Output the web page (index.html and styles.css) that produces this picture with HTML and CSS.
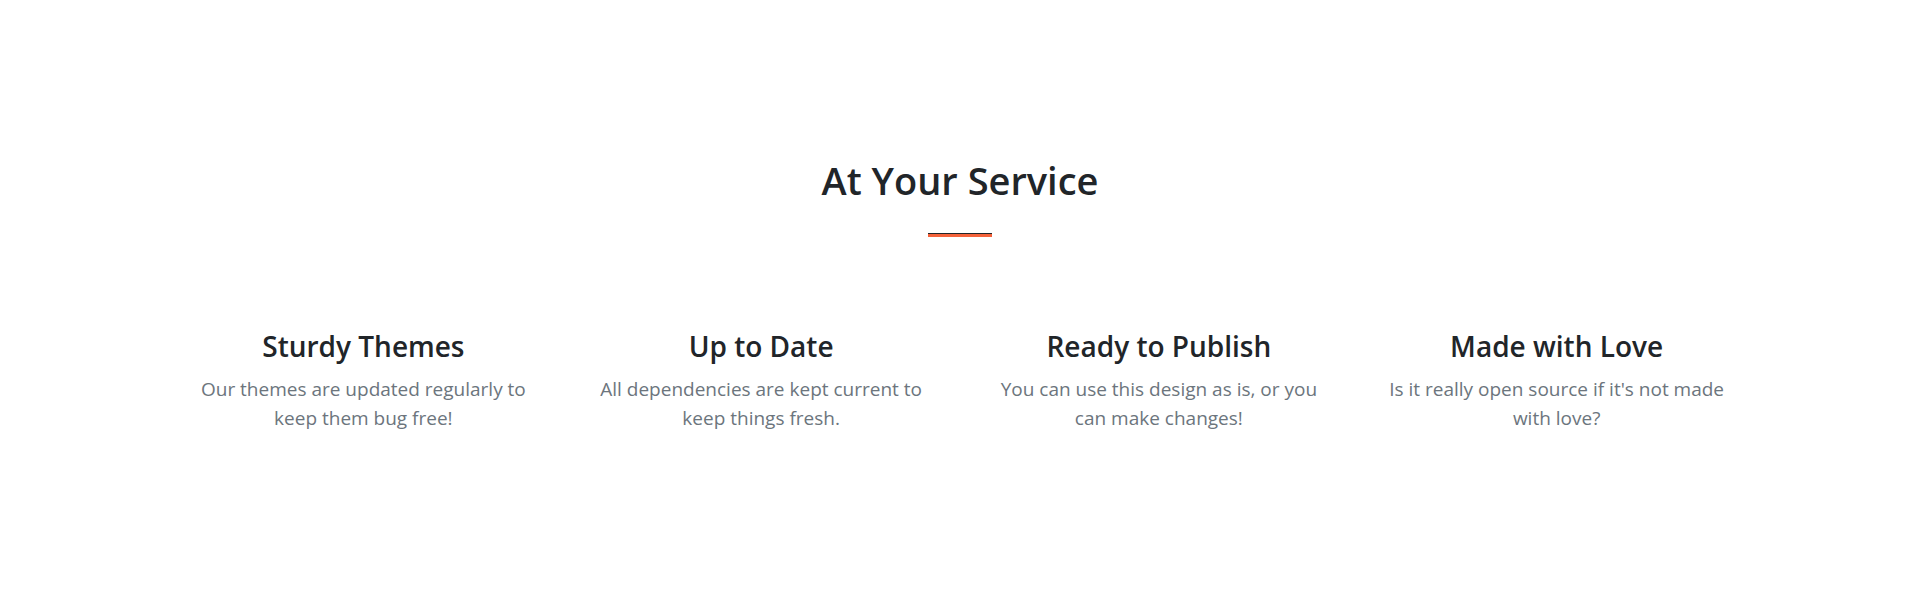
FILE: index.html
```html
<!DOCTYPE html>
<html lang="en">
<head>
<meta charset="utf-8">
<title>At Your Service</title>
<link rel="stylesheet" href="styles.css">
</head>
<body>
<section class="services">
  <h2 class="section-title">At Your Service</h2>
  <hr class="divider">
  <div class="features">
    <div class="feature">
      <h3 class="feature-title">Sturdy Themes</h3>
      <p class="feature-text">Our themes are updated regularly to keep them bug free!</p>
    </div>
    <div class="feature">
      <h3 class="feature-title">Up to Date</h3>
      <p class="feature-text">All dependencies are kept current to keep things fresh.</p>
    </div>
    <div class="feature">
      <h3 class="feature-title">Ready to Publish</h3>
      <p class="feature-text">You can use this design as is, or you can make changes!</p>
    </div>
    <div class="feature">
      <h3 class="feature-title">Made with Love</h3>
      <p class="feature-text">Is it really open source if it's not made with love?</p>
    </div>
  </div>
</section>
</body>
</html>
```
FILE: styles.css
```css
html, body {
  margin: 0;
  padding: 0;
  background: #fff;
}
body {
  font-family: "Open Sans", "Noto Sans", sans-serif;
  color: #212529;
}
.services {
  padding: 157px 0 120px;
  text-align: center;
}
.section-title {
  margin: 0;
  font-size: 38px;
  line-height: 46.6px;
  font-weight: 600;
  color: #212529;
}
.divider {
  box-sizing: border-box;
  width: 64px;
  height: 4px;
  margin: 29px auto 0;
  border: 0;
  border-top: 1px solid #212529;
  background: #f4623a;
}
.features {
  display: grid;
  grid-template-columns: repeat(4, 1fr);
  width: 1591px;
  margin: 92px auto 0;
}
.feature {
  padding: 0 28px;
}
.feature-title {
  margin: 0 0 12px;
  font-size: 28px;
  line-height: 34.6px;
  font-weight: 600;
  color: #212529;
}
.feature-text {
  margin: 0;
  font-size: 19px;
  line-height: 28.8px;
  color: #6c757d;
}
```
